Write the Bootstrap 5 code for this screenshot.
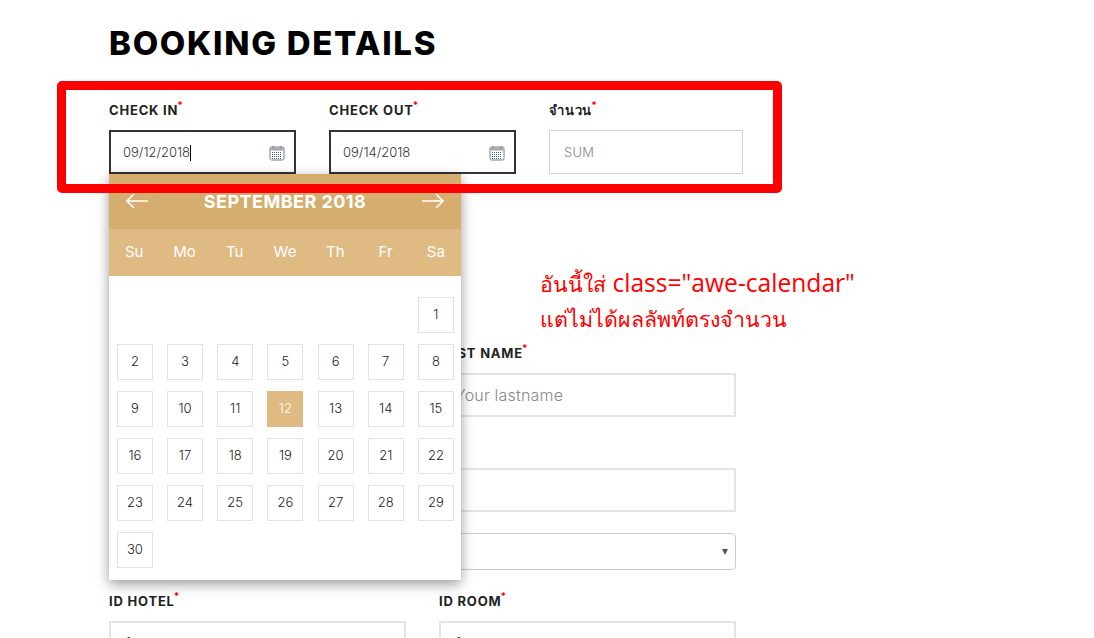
<!DOCTYPE html>
<html lang="en">
<head>
  <meta charset="UTF-8" />
  <meta name="viewport" content="width=device-width, initial-scale=1.0"/>
  <title>Booking Details</title>
  <link href="https://cdn.jsdelivr.net/npm/bootstrap@5.3.0/dist/css/bootstrap.min.css" rel="stylesheet"/>
  <style>
    html, body { height: 638px; overflow: hidden; }
    body {
      position: relative;
      background: #fff;
      font-family: Inter, "Noto Sans", sans-serif;
      color: #222;
    }
    .page-wrap { padding: 23px 0 0 109px; }
    .page-title {
      font-family: Inter, sans-serif;
      font-size: 33px;
      font-weight: 800;
      line-height: 40px;
      color: #000;
      margin: 0 0 38px;
      letter-spacing: 1.7px;
    }
    .field-label {
      display: block;
      font-size: 13px;
      font-weight: 700;
      line-height: 18px;
      margin-bottom: 11px;
      color: #222;
      letter-spacing: .8px;
    }
    .field-label sup { color: #f00; font-size: 10px; top: -.6em; margin-left: -1px; }
    .blank-label { height: 18px; margin-bottom: 11px; }
    .date-field { width: 187px; position: relative; }
    .sum-field { width: 194px; }
    .top-row { gap: 33px; }
    .text-input {
      height: 44px;
      border: 2px solid #e4e4e4;
      background: #fff;
      padding: 0 14px;
      font-size: 16px;
      font-weight: 300;
      letter-spacing: .2px;
      color: #333;
      display: flex;
      align-items: center;
      border-radius: 0;
    }
    .text-input.is-dark {
      border-color: #333;
      font-size: 13px;
      justify-content: space-between;
      padding: 1px 9px 0 12px;
      letter-spacing: 0;
    }
    .text-input.is-thin { border-width: 1px; border-color: #d2d2d2; font-size: 13px; color: #888; padding-top: 1px; }
    .hint { color: #888; }
    .caret-bar { display: inline-block; width: 1px; height: 16px; background: #000; vertical-align: middle; }
    .form-area { width: 627px; margin-top: 170px; }
    .form-row-gap { --bs-gutter-x: 33px; --bs-gutter-y: 0; }
    .mb-22 { margin-bottom: 22px; }
    .mb-21 { margin-bottom: 21px; }
    .select-box {
      height: 37px;
      border: 1px solid #ccc;
      border-radius: 4px;
      display: flex;
      align-items: center;
      justify-content: flex-end;
      padding-right: 7px;
    }
    .select-arrow {
      width: 0;
      height: 0;
      border-left: 3px solid transparent;
      border-right: 3px solid transparent;
      border-top: 6px solid #555;
    }
    /* calendar popup */
    .cal-pop {
      position: absolute;
      top: 100%;
      left: 0;
      width: 352px;
      background: #fff;
      box-shadow: 0 4px 12px rgba(0,0,0,.4);
      z-index: 5;
    }
    .cal-head {
      height: 55px;
      background: #d4ad6f;
      color: #fff;
      padding: 0 17px;
      font-size: 18px;
      font-weight: 700;
      letter-spacing: .45px;
    }
    .cal-head svg { margin-bottom: 2px; }
    .cal-week {
      height: 47px;
      background: #dfbb83;
      color: #fff;
      font-size: 15px;
      display: grid;
      grid-template-columns: repeat(7, 1fr);
      align-items: center;
      text-align: center;
    }
    .cal-days {
      display: grid;
      grid-template-columns: repeat(7, 1fr);
      grid-auto-rows: 47px;
      padding: 15px 0 7px .8px;
      justify-items: center;
      align-items: center;
    }
    .cal-day {
      width: 36px;
      height: 36px;
      border: 1px solid #e2e2e2;
      font-size: 13px;
      font-weight: 300;
      color: #222;
      display: flex;
      align-items: center;
      justify-content: center;
    }
    .cal-day.is-picked { background: #dfbb83; border-color: #dfbb83; color: #fff; }
    /* red annotation drawn over the screenshot */
    .mark-box {
      position: absolute;
      left: 57px;
      top: 81px;
      width: 725px;
      height: 112px;
      border: 9px solid #f00;
      border-radius: 5px;
      z-index: 10;
      pointer-events: none;
    }
    .mark-note {
      position: absolute;
      left: 540px;
      top: 266px;
      font-family: "Open Sans", "Noto Sans", sans-serif;
      font-size: 24.6px;
      line-height: 34px;
      color: #f00;
      z-index: 10;
      margin: 0;
    }
    .mark-thai { font-size: 21.4px; }
  </style>
</head>
<body>
  <div class="page-wrap">
    <h2 class="page-title">BOOKING DETAILS</h2>

    <div class="d-flex top-row">
      <div class="date-field">
        <label class="field-label">CHECK IN<sup>*</sup></label>
        <div class="text-input is-dark">
          <span>09/12/2018<span class="caret-bar"></span></span>
          <svg width="16" height="16" viewBox="0 0 16 16"><rect x="1" y="2" width="14" height="13" rx="1.5" fill="#fff" stroke="#6b7f93"/><rect x="1.5" y="2.5" width="13" height="3" fill="#a9a9a9"/><path d="M4 1v2M12 1v2" stroke="#6b7f93"/><path d="M3 7.5h10M3 9.5h10M3 11.5h10M3 13.5h10" stroke="#3f5a80" stroke-dasharray="1 1"/></svg>
        </div>
        <div class="cal-pop">
          <div class="cal-head d-flex align-items-center justify-content-between">
            <svg width="22" height="16" viewBox="0 0 22 16" fill="none" stroke="#fff" stroke-width="1.6"><path d="M22 8H1M8 1 1 8l7 7"/></svg>
            <span>SEPTEMBER 2018</span>
            <svg width="22" height="16" viewBox="0 0 22 16" fill="none" stroke="#fff" stroke-width="1.6"><path d="M0 8h21M14 1l7 7-7 7"/></svg>
          </div>
          <div class="cal-week">
            <span>Su</span><span>Mo</span><span>Tu</span><span>We</span><span>Th</span><span>Fr</span><span>Sa</span>
          </div>
          <div class="cal-days" id="cal-days"></div>
        </div>
      </div>

      <div class="date-field">
        <label class="field-label">CHECK OUT<sup>*</sup></label>
        <div class="text-input is-dark">
          <span>09/14/2018</span>
          <svg width="16" height="16" viewBox="0 0 16 16"><rect x="1" y="2" width="14" height="13" rx="1.5" fill="#fff" stroke="#6b7f93"/><rect x="1.5" y="2.5" width="13" height="3" fill="#a9a9a9"/><path d="M4 1v2M12 1v2" stroke="#6b7f93"/><path d="M3 7.5h10M3 9.5h10M3 11.5h10M3 13.5h10" stroke="#3f5a80" stroke-dasharray="1 1"/></svg>
        </div>
      </div>

      <div class="sum-field">
        <label class="field-label">จำนวน<sup>*</sup></label>
        <div class="text-input is-thin">SUM</div>
      </div>
    </div>

    <div class="form-area">
      <div class="row form-row-gap">
        <div class="col-6 mb-22">
          <div class="blank-label"></div>
          <div class="text-input"></div>
        </div>
        <div class="col-6 mb-22">
          <label class="field-label">LAST NAME<sup>*</sup></label>
          <div class="text-input hint">Your lastname</div>
        </div>
        <div class="col-6 mb-21">
          <div class="blank-label"></div>
          <div class="text-input"></div>
        </div>
        <div class="col-6 mb-21">
          <div class="blank-label"></div>
          <div class="text-input"></div>
        </div>
        <div class="col-12 mb-22">
          <div class="select-box"><span class="select-arrow"></span></div>
        </div>
        <div class="col-6">
          <label class="field-label">ID HOTEL<sup>*</sup></label>
          <div class="text-input">1</div>
        </div>
        <div class="col-6">
          <label class="field-label">ID ROOM<sup>*</sup></label>
          <div class="text-input">1</div>
        </div>
      </div>
    </div>
  </div>

  <div class="mark-box"></div>
  <p class="mark-note"><span class="mark-thai">อันนี้ใส่</span> class="awe-calendar"<br><span class="mark-thai">แต่ไม่ได้ผลลัพท์ตรงจำนวน</span></p>

  <script>
    const days = document.getElementById('cal-days');
    // September 2018 starts on a Saturday
    for (let i = 0; i < 6; i++) days.appendChild(document.createElement('span'));
    for (let d = 1; d <= 30; d++) {
      const cell = document.createElement('div');
      cell.className = 'cal-day' + (d === 12 ? ' is-picked' : '');
      cell.textContent = d;
      days.appendChild(cell);
    }
  </script>
</body>
</html>
